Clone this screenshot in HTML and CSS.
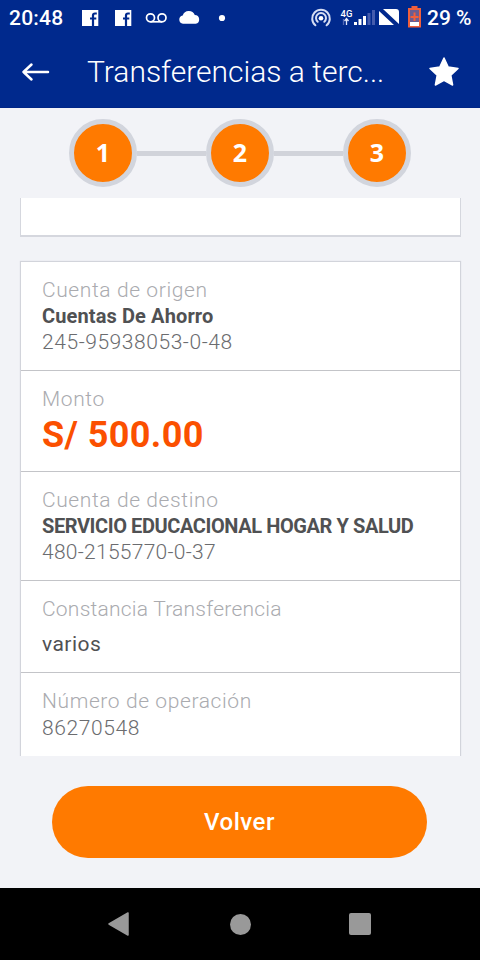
FILE: index.html
```html
<!DOCTYPE html>
<html lang="es">
<head>
<meta charset="utf-8">
<title>Transferencias a terceros</title>
<link rel="stylesheet" href="styles.css">
</head>
<body>
<div class="app">
  <div class="status">
    <span class="clock">20:48</span>
    <svg class="notifications" width="150" height="36" viewBox="0 0 150 36" fill="#fff">
      <path d="M2 10h16.300v16H2zM35 10h16.300v16H35z"/>
      <path d="M13 26V15.500q0-2 2-2h1.800M10 18.500h6.300M46 26V15.500q0-2 2-2h1.800M43 18.500h6.300" fill="none" stroke="#00298d" stroke-width="2.200"/>
      <g fill="none" stroke="#fff" stroke-width="1.700"><circle cx="70.500" cy="17.800" r="4"/><circle cx="82" cy="17.800" r="4"/><path d="M70.500 21.800h11.500"/></g>
      <path d="M103 23.700a4.200 4.200 0 0 1-.3-8.300 6.500 6.500 0 0 1 12.100-.4 4.400 4.400 0 0 1 .9 8.700z"/>
      <circle cx="142" cy="18" r="3.100"/>
    </svg>
    <svg class="signals" width="112" height="36" viewBox="0 0 112 36">
      <g fill="none" stroke="#d5dcf2" stroke-width="2" stroke-linecap="round"><path d="M5.400 25.300a8.800 8.800 0 1 1 11.200 0M7.700 21.800a5 5 0 1 1 6.600 0"/></g>
      <circle cx="11" cy="18.300" r="2.300" fill="#fff"/>
      <text class="network" x="30.500" y="16.800">4G</text>
      <path d="M36.500 25v-6m-2 2l2-2.500 2 2.500" fill="none" stroke="#e5eafa" stroke-width="1.300"/>
      <path d="M33.500 19v6" stroke="#5269b4" stroke-width="1.300"/>
      <path d="M44 22h3v3h-3zM48.500 19h3v6h-3zM53 16h3v9h-3z" fill="#fff"/>
      <path d="M57.500 13h3v12h-3zM62 10h3v15h-3z" fill="#445cae"/>
      <path d="M69 11L84 25H69zM73 9h13q3 0 3 3v12z" fill="#fff"/>
      <path d="M69.500 9l18 16.500" stroke="#00298d" stroke-width="1.200"/>
      <path d="M99 9h11v17.500H99z" fill="#6a5d91" stroke="#f05f3b" stroke-width="2"/>
      <path d="M101.500 6h6v3h-6z" fill="#f05f3b"/><path d="M100 22h9v4h-9z" fill="#fff"/>
      <path d="M104.500 12.500v8.500M100.500 17h8" stroke="#f05f3b" stroke-width="2"/>
    </svg>
    <span class="percent">29 %</span>
  </div>
  <header class="header">
    <svg width="30" height="24" viewBox="0 0 30 24" fill="none" stroke="#fff" stroke-width="2.500" stroke-linecap="round" stroke-linejoin="round"><path d="M28 12H3.500M11.500 4.500L3.500 12l8 7.500"/></svg>
    <h1 class="title">Transferencias a terc...</h1>
    <svg width="32" height="32" viewBox="0 0 32 32"><path d="M16 2l4.200 9.100 9.800 1.300-7.200 6.900 1.800 9.700-8.600-4.700L7.400 29l1.800-9.700L2 12.400l9.800-1.300z" fill="#fff" stroke="#fff" stroke-width="1.500" stroke-linejoin="round"/></svg>
  </header>
  <div class="steps">
    <span class="step">1</span><span class="link"></span><span class="step">2</span><span class="link"></span><span class="step">3</span>
  </div>
  <main class="content">
    <div class="card-end"></div>
    <div class="card">
      <section class="row"><div class="label origin">Cuenta de origen</div><div class="name savings">Cuentas De Ahorro</div><div class="number source">245-95938053-0-48</div></section>
      <section class="row"><div class="label">Monto</div><div class="amount">S/ 500.00</div></section>
      <section class="row"><div class="label">Cuenta de destino</div><div class="name payee">SERVICIO EDUCACIONAL HOGAR Y SALUD</div><div class="number target">480-2155770-0-37</div></section>
      <section class="row"><div class="label record">Constancia Transferencia</div><div class="note">varios</div></section>
      <section class="row"><div class="label">Número de operación</div><div class="number code">86270548</div></section>
    </div>
  </main>
  <div class="actions"><button class="button">Volver</button></div>
  <nav class="nav">
    <svg width="24" height="26" viewBox="0 0 24 26"><path d="M2 13L21 2v22z" fill="#999" stroke="#999" stroke-width="1.500" stroke-linejoin="round"/></svg>
    <span class="home"></span>
    <span class="recent"></span>
  </nav>
</div>
</body>
</html>
```
FILE: styles.css
```css
* { box-sizing: border-box; }
body { margin: 0; font-family: Roboto, "Liberation Sans", sans-serif; background: #f2f3f7; }
.app { width: 480px; height: 960px; display: flex; flex-direction: column; overflow: hidden; }
svg { display: block; flex: none; }
.status { height: 36px; flex: none; display: flex; align-items: center; background: #00298d; color: #fff; font-size: 21px; font-weight: 500; line-height: 38px; white-space: nowrap; padding-left: 9px; }
.clock { width: 71px; letter-spacing: 0.2px; }
.signals { margin-left: 80px; }
.percent { margin-left: 5px; }
.network { font: 500 9.500px Roboto, sans-serif; fill: #fff; }
.header { height: 72px; flex: none; display: flex; align-items: center; padding: 0 20px 0 20px; background: #00298d; color: #fff; border-bottom: 1px solid #002586; }
.title { margin: 0 0 0 37px; width: 341px; font-size: 30px; font-weight: 300; line-height: 40px; white-space: nowrap; }
.steps { height: 90px; flex: none; display: flex; align-items: center; justify-content: center; }
.step { width: 68px; height: 68px; border: 5px solid #d2d5dd; border-radius: 50%; background: #ff7a00; color: #fff; text-align: center; font: 700 25px/57px "Noto Sans", sans-serif; }
.link { width: 69px; height: 5px; background: #d1d3da; }
.content { height: 558px; flex: none; padding: 0 19px 0 20px; }
.card-end { height: 39px; margin-bottom: 24px; background: #fff; border: solid #d5d7de; border-width: 0 1px 2px; }
.card { height: 495px; background: #fff; border: solid #d2d4db; border-width: 1px 1px 0; box-shadow: 0 0 1px #d5d7de; clip-path: inset(-1px -1px 0); }
.row { padding: 15px 21px; border-bottom: 1px solid #c3c4c8; white-space: nowrap; color: #6b6c6f; font-size: 21px; font-weight: 300; line-height: 26px; }
.row:last-child { border: 0; }
.label { color: #aaabaf; letter-spacing: 0.6px; }
.record { letter-spacing: 0.23px; }
.name { color: #505153; font-weight: 700; font-size: 20px; }
.savings { letter-spacing: 0.12px; }
.payee { letter-spacing: -0.41px; }
.source { letter-spacing: 0.56px; }
.target { letter-spacing: 0.27px; }
.amount { height: 44px; line-height: 47px; color: #fb5000; font-size: 36px; font-weight: 700; letter-spacing: 0.4px; }
.note { margin-top: 9px; color: #505153; font-weight: 400; letter-spacing: 0.45px; }
.code { padding-top: 1px; letter-spacing: 0.6px; }
.actions { height: 132px; flex: none; padding: 30px 53px 0 52px; }
.button { display: block; width: 375px; height: 72px; padding: 0; border: 0; border-radius: 36px; background: #ff7a00; color: #fff; font: 500 24px/72px Roboto, sans-serif; letter-spacing: 0.5px; }
.nav { height: 72px; flex: none; display: flex; align-items: center; background: #000; padding-left: 107px; }
.home { width: 21px; height: 21px; margin-left: 99px; border-radius: 50%; background: #999; }
.recent { width: 22px; height: 22px; margin-left: 98px; border-radius: 2px; background: #999; }
```
